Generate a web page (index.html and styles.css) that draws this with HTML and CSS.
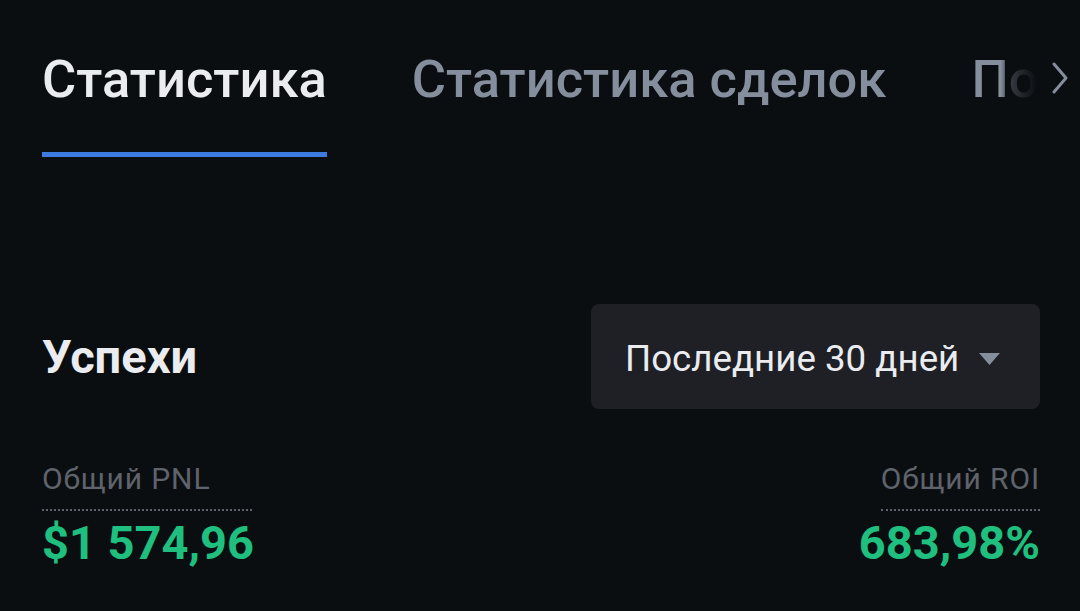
FILE: index.html
```html
<!DOCTYPE html>
<html lang="ru">
<head>
<meta charset="utf-8">
<link rel="stylesheet" href="styles.css">
</head>
<body>
<div class="page">
  <nav class="tabs">
    <div class="tab active">Статистика</div>
    <div class="tab">Статистика сделок</div>
    <div class="tab fade">По</div>
    <div class="chev"><svg width="18" height="34" viewBox="0 0 18 34"><path d="M3 3 L15 17 L3 31" fill="none" stroke="#848e9c" stroke-width="3" stroke-linecap="round" stroke-linejoin="round"/></svg></div>
  </nav>
  <section class="head">
    <h2 class="title">Успехи</h2>
    <div class="select">
      <span>Последние 30 дней</span>
      <svg class="tri" width="21" height="12" viewBox="0 0 21 12"><path d="M0 0 H21 L10.5 12 Z" fill="#848e9c"/></svg>
    </div>
  </section>
  <section class="stats">
    <div class="stat">
      <div class="label wide">Общий PNL</div>
      <div class="value">$1 574,96</div>
    </div>
    <div class="stat right">
      <div class="label">Общий ROI</div>
      <div class="value">683,98%</div>
    </div>
  </section>
</div>
</body>
</html>
```
FILE: styles.css
```css
html, body {
  margin: 0;
  padding: 0;
  background: #0b0e11;
  font-family: Roboto, "Noto Sans", sans-serif;
}
.page {
  width: 1080px;
  height: 611px;
  overflow: hidden;
  padding: 0 40px 0 42px;
  box-sizing: border-box;
}
.tabs {
  display: flex;
  align-items: flex-start;
  height: 157px;
  white-space: nowrap;
  margin-right: -40px;
}
.tab {
  font-size: 52.5px;
  font-weight: 500;
  color: #848e9c;
  padding-top: 48px;
  line-height: 62px;
  margin-right: 85px;
  height: 157px;
  box-sizing: border-box;
  flex: none;
}
.tab.active {
  color: #eaecef;
  border-bottom: 5px solid #3e7be0;
}
.tab.fade {
  margin-right: 0;
  width: 66px;
  overflow: hidden;
  -webkit-mask-image: linear-gradient(to right, #000 45%, rgba(0,0,0,0.35) 60%, transparent 100%);
  mask-image: linear-gradient(to right, #000 45%, rgba(0,0,0,0.35) 60%, transparent 100%);
}
.chev {
  margin-left: 14px;
  padding-top: 61px;
  flex: none;
}
.head {
  display: flex;
  justify-content: space-between;
  align-items: center;
  margin-top: 147px;
}
.title {
  margin: 0;
  font-size: 47px;
  font-weight: 700;
  color: #eaecef;
}
.select {
  width: 449px;
  height: 105px;
  box-sizing: border-box;
  background: #1e2026;
  border-radius: 8px;
  display: flex;
  align-items: center;
  padding: 4px 40px 0 34px;
  justify-content: space-between;
  font-size: 36.7px;
  color: #eaecef;
}
.stats {
  display: flex;
  justify-content: space-between;
  margin-top: 50px;
}
.stat {
  display: flex;
  flex-direction: column;
  align-items: flex-start;
}
.stat.right {
  align-items: flex-end;
}
.label {
  font-size: 30px;
  letter-spacing: 0.9px;
  color: #5f636b;
  line-height: 40px;
  padding-bottom: 10px;
  border-bottom: 2px dotted #5f636b;
}
.label.wide {
  padding-right: 42px;
}
.value {
  font-size: 47px;
  font-weight: 700;
  color: #1fc07f;
  line-height: 60px;
  margin-top: 2px;
}
```
